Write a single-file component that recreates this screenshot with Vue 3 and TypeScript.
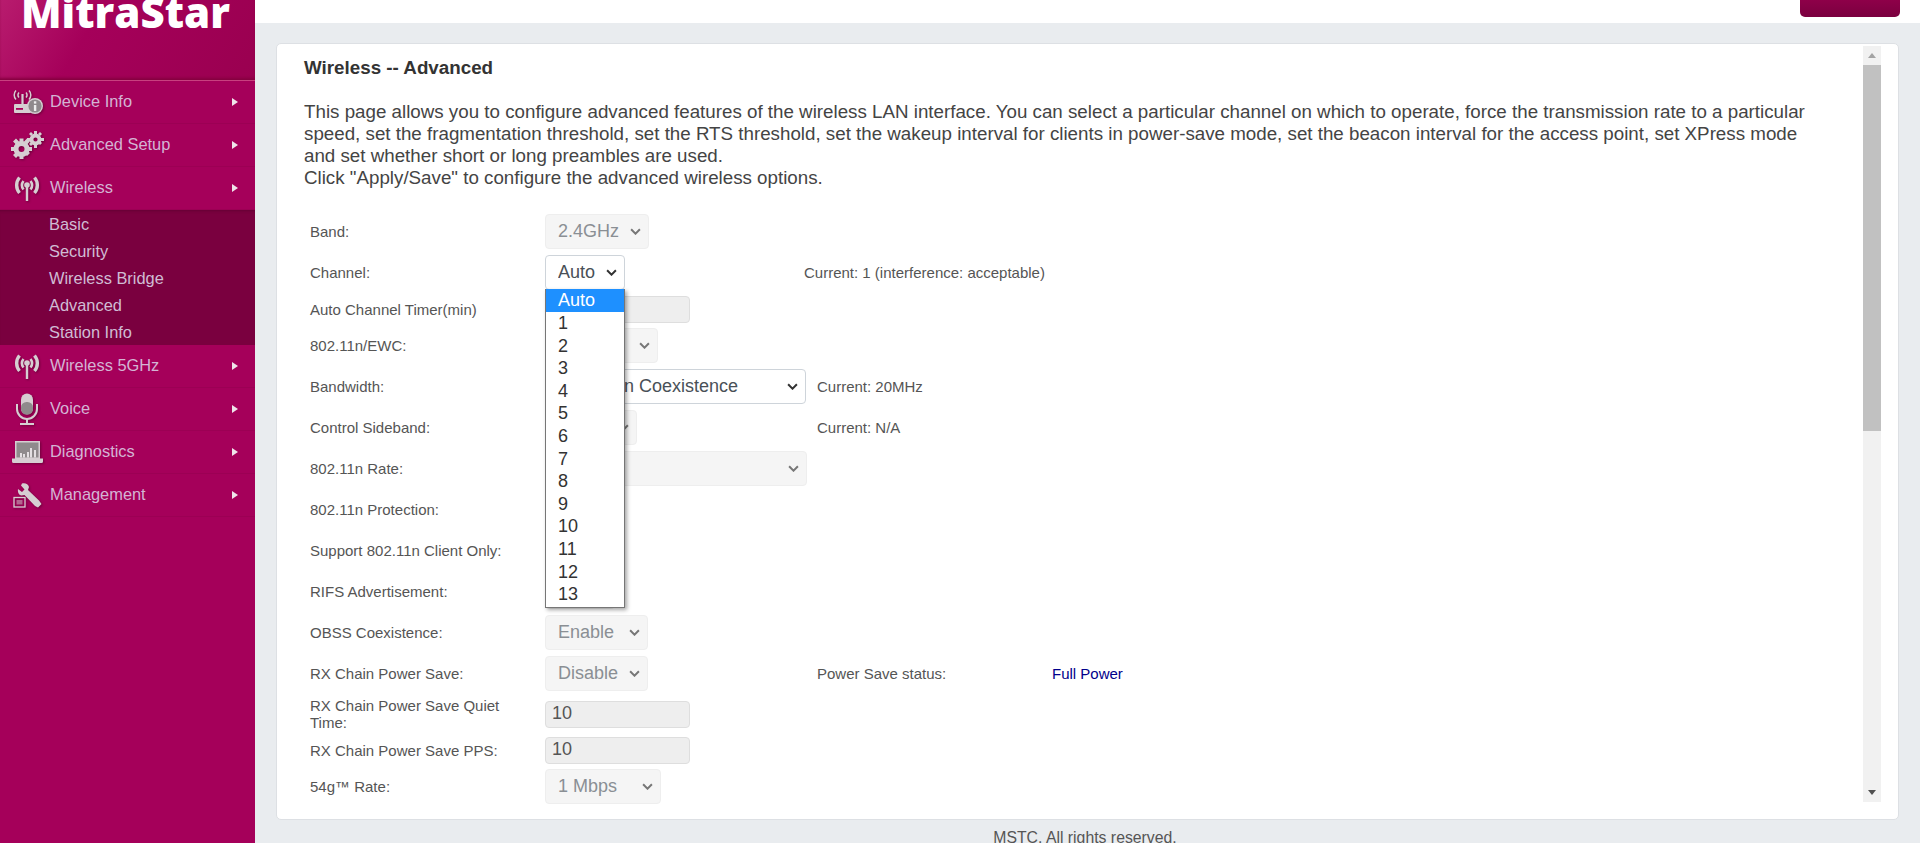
<script setup lang="ts">
interface NavItem { label: string; icon: string }
interface Row {
  label: string;
  kind: 'select' | 'input' | 'channel';
  value: string;
  width?: string;
  disabled?: boolean;
  note?: string;
  status?: string;
  size?: string;
}

const topNav: NavItem[] = [
  { label: 'Device Info', icon: 'info' },
  { label: 'Advanced Setup', icon: 'gears' },
  { label: 'Wireless', icon: 'wifi' },
];
const subNav = ['Basic', 'Security', 'Wireless Bridge', 'Advanced', 'Station Info'];
const bottomNav: NavItem[] = [
  { label: 'Wireless 5GHz', icon: 'wifi' },
  { label: 'Voice', icon: 'mic' },
  { label: 'Diagnostics', icon: 'laptop' },
  { label: 'Management', icon: 'wrench' },
];
const channels = ['1', '2', '3', '4', '5', '6', '7', '8', '9', '10', '11', '12', '13'];

const rows: Row[] = [
  { label: 'Band:', kind: 'select', value: '2.4GHz', width: 'w104', disabled: true },
  { label: 'Channel:', kind: 'channel', value: 'Auto', note: 'Current: 1 (interference: acceptable)' },
  { label: 'Auto Channel Timer(min)', kind: 'input', value: '0', size: 'short' },
  { label: '802.11n/EWC:', kind: 'select', value: 'Auto', width: 'w113', disabled: true },
  { label: 'Bandwidth:', kind: 'select', value: '20MHz in Coexistence', width: 'w261', note: 'Current: 20MHz' },
  { label: 'Control Sideband:', kind: 'select', value: 'Lower', width: 'w92', disabled: true, note: 'Current: N/A' },
  { label: '802.11n Rate:', kind: 'select', value: 'Auto', width: 'w262', disabled: true },
  { label: '802.11n Protection:', kind: 'select', value: 'Auto', width: 'w70' },
  { label: 'Support 802.11n Client Only:', kind: 'select', value: 'Off', width: 'w70' },
  { label: 'RIFS Advertisement:', kind: 'select', value: 'Off', width: 'w70', disabled: true },
  { label: 'OBSS Coexistence:', kind: 'select', value: 'Enable', width: 'w103', disabled: true },
  { label: 'RX Chain Power Save:', kind: 'select', value: 'Disable', width: 'w103', disabled: true, note: 'Power Save status:', status: 'Full Power' },
  { label: 'RX Chain Power Save Quiet Time:', kind: 'input', value: '10', size: 'quiet' },
  { label: 'RX Chain Power Save PPS:', kind: 'input', value: '10', size: 'pps' },
  { label: '54g™ Rate:', kind: 'select', value: '1 Mbps', width: 'w116', disabled: true },
];
</script>

<template>
  <div class="page">
    <aside class="sidebar">
      <div class="logo"><span class="logo-text">MitraStar</span></div>
      <nav>
        <template v-for="group in [topNav, bottomNav]" :key="group[0].label">
          <a v-for="item in group" :key="item.label" class="nav-item">
            <span class="nav-icon">
              <svg v-if="item.icon === 'info'" viewBox="0 0 32 26" width="32" height="26">
                <path d="M5 1.500a6.500 6.500 0 0 0 0 9M18 1.500a6.500 6.500 0 0 1 0 9M8 3.500a3.500 3.500 0 0 0 0 5M15 3.500a3.500 3.500 0 0 1 0 5" class="line" />
                <path d="M10.400 5h2.200v10h-2.200z" class="solid" />
                <rect x="3" y="15" width="17" height="9" rx="1" class="solid" />
                <rect x="5" y="19" width="7" height="1.800" fill="#a8005a" />
                <circle cx="24" cy="17" r="8" class="solid" />
                <circle cx="24" cy="17" r="6.600" fill="#8f8a8c" />
                <rect x="22.900" y="16" width="2.400" height="6" fill="#eee" />
                <rect x="22.900" y="12.300" width="2.400" height="2.300" fill="#eee" />
              </svg>
              <svg v-else-if="item.icon === 'gears'" viewBox="0 0 34 28" width="34" height="28">
                <circle cx="11.500" cy="18" r="5.500" fill="none" stroke="#d6ced2" stroke-width="5" />
                <path d="M9.500 7.500h4v4h-4zM9.500 24h4v4h-4zM1 16h4v4H1zM18 16h4v4h-4zM3 10.500l3-3 3 3-3 3zM14 22l3-3 3 3-3 3zM3 24l3-3 3 3-3 3zM14 10.500l3-3 3 3-3 3z" class="solid" />
                <circle cx="25.500" cy="8.500" r="4" fill="none" stroke="#d6ced2" stroke-width="3.800" />
                <path d="M24 0h3v3h-3zM24 14h3v3h-3zM17 7h3v3h-3zM31 7h3v3h-3zM19 3l2-2 2 2-2 2zM28 12l2-2 2 2-2 2zM19 13l2-2 2 2-2 2zM28 3l2-2 2 2-2 2z" class="solid" />
              </svg>
              <svg v-else-if="item.icon === 'wifi'" viewBox="0 0 28 25" width="28" height="25">
                <path d="M6.500 1.500a12 12 0 0 0 0 15.500M21.500 1.500a12 12 0 0 1 0 15.500" class="arc" />
                <path d="M10.500 5a7 7 0 0 0 0 8.500M17.500 5a7 7 0 0 1 0 8.500" class="arc mid" />
                <circle cx="14" cy="9" r="2.800" class="solid" />
                <rect x="12.800" y="10" width="2.400" height="15" class="solid" />
              </svg>
              <svg v-else-if="item.icon === 'mic'" viewBox="0 0 24 32" width="24" height="32">
                <rect x="6" y="0.500" width="12" height="21" rx="6" class="solid" />
                <rect x="6" y="9" width="12" height="12.500" rx="5.500" fill="#8f8a8c" />
                <path d="M2 11v5a10 10 0 0 0 20 0v-5" class="arc thin" />
                <path d="M12 26v4M5 31h14" class="arc thin" />
              </svg>
              <svg v-else-if="item.icon === 'laptop'" viewBox="0 0 31 22" width="31" height="22">
                <rect x="3" y="0" width="25" height="18" class="solid" />
                <rect x="4.500" y="1.500" width="22" height="15" fill="#8f8a8c" />
                <path d="M8 12h2v4.500H8zM11 13h2v3.500h-2zM15 11h2v5.500h-2zM18 7h2v9.500h-2zM22 9h2v7.500h-2z" fill="#e4dfe2" />
                <path d="M0 17.500h31v3a1.500 1.500 0 0 1-1.500 1.500h-28A1.500 1.500 0 0 1 0 20.500z" class="solid" />
              </svg>
              <svg v-else viewBox="0 0 29 26" width="29" height="26">
                <path d="M9 1.500c3-1 6.500.5 7 3.500l-1 3L26 18.500l2.500 3.500-3.500 3.500-3-1.500L11.500 13l-3 .5C5.500 13 4.500 10 5 7l4 3 2.500-2.500-3.500-4z" class="solid" />
                <rect x="1" y="15.500" width="11" height="9.500" fill="none" stroke="#d6ced2" stroke-width="1.300" />
                <rect x="3.500" y="18" width="6" height="4.500" fill="#d6ced2" opacity="0.5" />
              </svg>
            </span>
            <span class="nav-label">{{ item.label }}</span>
            <span class="nav-arrow"></span>
          </a>
          <div v-if="group === topNav" class="sub-nav">
            <a v-for="sub in subNav" :key="sub" class="sub-item">{{ sub }}</a>
          </div>
        </template>
      </nav>
    </aside>

    <div class="main">
      <header class="topbar"><span class="top-button"></span></header>

      <section class="card">
        <div class="content">
          <h1 class="title">Wireless -- Advanced</h1>
          <p class="intro">
            This page allows you to configure advanced features of the wireless LAN interface. You can select a particular channel on which to operate, force the transmission rate to a particular speed, set the fragmentation threshold, set the RTS threshold, set the wakeup interval for clients in power-save mode, set the beacon interval for the access point, set XPress mode and set whether short or long preambles are used.<br />
            Click "Apply/Save" to configure the advanced wireless options.
          </p>

          <div class="form">
            <div v-for="row in rows" :key="row.label" class="row" :class="row.size">
              <div class="label">{{ row.label }}</div>
              <div class="control" :class="{ 'control-channel': row.kind === 'channel' }">
                <input v-if="row.kind === 'input'" class="text-input" :value="row.value" disabled />
                <div v-else-if="row.kind === 'channel'" class="channel-wrap">
                  <select class="select w80">
                    <option>Auto</option>
                  </select>
                  <ul class="dropdown">
                    <li class="active">Auto</li>
                    <li v-for="c in channels" :key="c">{{ c }}</li>
                  </ul>
                </div>
                <select v-else class="select" :class="row.width" :disabled="row.disabled">
                  <option>{{ row.value }}</option>
                </select>
              </div>
              <div v-if="row.note" class="note">{{ row.note }}</div>
              <div v-if="row.status" class="status">{{ row.status }}</div>
            </div>
          </div>
        </div>

        <div class="scrollbar">
          <span class="scroll-btn"><i class="tri up"></i></span>
          <span class="scroll-thumb"></span>
          <span class="scroll-track"></span>
          <span class="scroll-btn"><i class="tri down"></i></span>
        </div>
      </section>

      <footer class="footer">MSTC. All rights reserved.</footer>
    </div>
  </div>
</template>

<style>
html, body { margin: 0; height: 100%; overflow: hidden; background: #e9ecef; }
</style>

<style scoped>
.page {
  display: flex;
  width: 1920px;
  height: 843px;
  overflow: hidden;
  font-family: "Liberation Sans", Arial, sans-serif;
  background: #e9ecef;
}
.sidebar {
  width: 255px;
  flex: none;
  background: #a5005a;
}
.logo {
  height: 81px;
  box-sizing: border-box;
  overflow: hidden;
  padding-left: 21px;
  background: linear-gradient(120deg, #b81c6e 0%, #a5005a 35%, #9a0050 100%);
  border-bottom: 1px solid #c8407f;
  box-shadow: inset 0 -3px 3px -1px #85003f;
}
.logo-text {
  display: block;
  margin-top: -20px;
  font-family: "Open Sans", sans-serif;
  font-weight: 800;
  font-size: 42px;
  line-height: 64px;
  color: #fff;
}
.nav-item {
  display: flex;
  align-items: center;
  height: 43px;
  position: relative;
  border-bottom: 1px solid #9c0054;
  box-sizing: border-box;
  color: #d4b4d4;
  font-size: 16.400px;
}
.nav-icon {
  width: 50px;
  flex: none;
  display: flex;
  justify-content: center;
  padding-left: 4px;
  box-sizing: border-box;
}
.nav-icon svg { filter: drop-shadow(1px 1px 1px rgba(60, 0, 30, 0.5)); }
.solid { fill: #d6ced2; }
.line { fill: none; stroke: #d6ced2; stroke-width: 1.500; }
.arc { fill: none; stroke: #d6ced2; stroke-width: 3.400; }
.arc.mid { stroke-width: 2.600; }
.arc.thin { stroke-width: 2; }
.nav-label { flex: 1; padding-bottom: 1px; }
.nav-arrow {
  width: 0;
  height: 0;
  margin-right: 17px;
  border-left: 6px solid #efe4ea;
  border-top: 4px solid transparent;
  border-bottom: 4px solid transparent;
}
.sub-nav {
  background: #7a003f;
  box-shadow: inset 0 3px 3px -2px #630033;
}
.sub-item {
  display: block;
  height: 27px;
  line-height: 28px;
  padding-left: 49px;
  color: #d0bcd4;
  font-size: 16.400px;
}
.main {
  flex: 1;
  min-width: 0;
  display: flex;
  flex-direction: column;
}
.topbar {
  height: 23px;
  flex: none;
  background: #fff;
  display: flex;
  justify-content: flex-end;
  padding-right: 20px;
  box-sizing: border-box;
}
.top-button {
  width: 100px;
  height: 17px;
  background: linear-gradient(#8e0049, #7a003f);
  border-radius: 0 0 5px 5px;
}
.card {
  margin: 20px 21px 0;
  height: 777px;
  flex: none;
  background: #fff;
  border: 1px solid #dde0e4;
  border-radius: 5px;
  box-sizing: border-box;
  display: flex;
  overflow: hidden;
  padding: 2px 17px 0 0;
}
.content {
  flex: 1;
  min-width: 0;
  overflow: hidden;
  padding-left: 27px;
}
.title {
  margin: 11px 0 0;
  font-size: 18.800px;
  line-height: 22px;
  font-weight: 700;
  color: #333;
}
.intro {
  margin: 22px 0 0;
  width: 1512px;
  font-size: 18.750px;
  line-height: 22px;
  color: #444;
}
.form {
  margin-top: 22px;
  padding-left: 6px;
}
.row {
  display: flex;
  align-items: center;
  height: 41px;
  font-size: 15px;
  color: #555;
}
.row.short { height: 32px; }
.row.quiet { height: 40px; }
.row.pps { height: 32px; }
.label {
  width: 235px;
  flex: none;
  line-height: 17px;
  padding-right: 20px;
  box-sizing: border-box;
}
.control {
  width: 272px;
  flex: none;
}
.control-channel { width: 259px; }
.note { width: 235px; flex: none; white-space: nowrap; }
.status { color: #00008b; }
.select {
  display: block;
  height: 35px;
  box-sizing: border-box;
  padding: 0 6px 1px 12px;
  font-family: inherit;
  font-size: 18px;
  color: #495057;
  appearance: none;
  background-color: #fff;
  background-repeat: no-repeat;
  background-position: right 7px center;
  background-size: 11px 7px;
  background-image: url("data:image/svg+xml,%3Csvg xmlns='http://www.w3.org/2000/svg' viewBox='0 0 10 6'%3E%3Cpath d='M1 1l4 4 4-4' fill='none' stroke='%23333' stroke-width='1.800'/%3E%3C/svg%3E");
  border: 1px solid #ced4da;
  border-radius: 4px;
}
.select:disabled {
  color: #8a8f94;
  background-color: #f5f5f5;
  background-image: url("data:image/svg+xml,%3Csvg xmlns='http://www.w3.org/2000/svg' viewBox='0 0 10 6'%3E%3Cpath d='M1 1l4 4 4-4' fill='none' stroke='%23777' stroke-width='1.800'/%3E%3C/svg%3E");
  border-color: #eeeeee;
  opacity: 1;
}
.w80 { width: 80px; }
.w70 { width: 70px; }
.w92 { width: 92px; }
.w103 { width: 103px; }
.w104 { width: 104px; }
.w113 { width: 113px; }
.w116 { width: 116px; }
.w261 { width: 261px; }
.w262 { width: 262px; }
.text-input {
  display: block;
  width: 145px;
  height: 27px;
  box-sizing: border-box;
  padding: 0 6px 2px;
  font-family: inherit;
  font-size: 18px;
  color: #555;
  background: #eeeeee;
  border: 1px solid #dedede;
  border-radius: 4px;
}
.channel-wrap { position: relative; }
.dropdown {
  position: absolute;
  z-index: 5;
  top: 34px;
  left: 0;
  width: 80px;
  box-sizing: border-box;
  margin: 0;
  padding: 0 0 1px;
  list-style: none;
  background: #fff;
  border: 1px solid #767676;
  border-top: none;
  box-shadow: 2px 2px 4px rgba(0, 0, 0, 0.35);
  font-size: 18px;
  color: #333;
}
.dropdown li {
  height: 22.600px;
  line-height: 22.600px;
  padding-left: 12px;
}
.dropdown li.active {
  height: 23px;
  background: #1e90ff;
  color: #fff;
}
.scrollbar {
  width: 18px;
  flex: none;
  margin-bottom: 17px;
  display: flex;
  flex-direction: column;
  background: #f1f1f1;
}
.scroll-btn {
  height: 19px;
  flex: none;
  display: flex;
  align-items: center;
  justify-content: center;
}
.scroll-thumb { height: 366px; flex: none; background: #c1c1c1; }
.scroll-track { flex: 1; }
.tri {
  width: 0;
  height: 0;
  border-left: 4px solid transparent;
  border-right: 4px solid transparent;
}
.tri.up { border-bottom: 5px solid #a3a3a3; }
.tri.down { border-top: 5px solid #505050; }
.footer {
  text-align: center;
  font-size: 15.800px;
  color: #555;
  margin-top: 9px;
  padding-right: 5px;
  line-height: 18px;
}
</style>
